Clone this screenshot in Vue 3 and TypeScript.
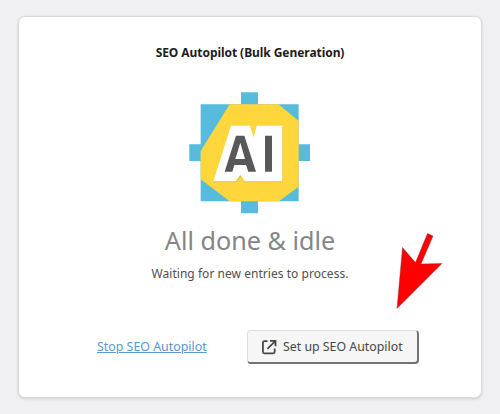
<script setup lang="ts">
const title: string = 'SEO Autopilot (Bulk Generation)'
const status: string = 'All done & idle'
const detail: string = 'Waiting for new entries to process.'
</script>

<template>
  <main class="page">
    <section class="card">
      <h1 class="title"><span>{{ title }}</span></h1>
      <svg class="logo" viewBox="27 20 366 366" aria-hidden="true">
        <path fill="#57bbdc" d="M183 21h51v363h-51zM28 177h362v50H28zM62 57h294v291H62z" />
        <path fill="#ffd63c" d="M149 57H296L356 107V304L297 348H149L62 282V197Z" />
        <path fill="#d6ae35" opacity=".6" d="M153 125H212L222 160L231 125H309V291H193L182 275L169 291H101Z" />
        <path fill="#fff" d="M153 121H210L221 156L230 121H307V288H193L181 268L168 288H100Z" />
        <path fill="#58585a" fill-rule="evenodd" d="M168 151H193L228 259H205L198 239H163L157 259H134ZM181 172L166 221H195ZM255 151H276V259H255Z" />
      </svg>
      <h2 class="status"><span>{{ status }}</span></h2>
      <p class="detail"><span>{{ detail }}</span></p>
      <div class="actions">
        <a class="stop" href="#">Stop SEO Autopilot</a>
        <button class="setup" type="button">
          <svg class="open-icon" viewBox="0 0 16 16" aria-hidden="true">
            <path d="M6.5 2.2H3.4Q1.9 2.2 1.9 3.7V12.8Q1.9 14.3 3.4 14.3H12.2Q13.7 14.3 13.7 12.8V9.6M9 1.8H14.5V7.3M14.2 2.1L6.4 9.8" />
          </svg>
          <span>Set up SEO Autopilot</span>
        </button>
      </div>
    </section>
    <svg class="pointer" viewBox="0 0 44 78" aria-hidden="true">
      <path d="M31.5 2.5L37 5L25 33L46 32.5L1 77.5L6.5 16.5L19.5 31.5Z" />
    </svg>
  </main>
</template>

<style>
body {
  margin: 0;
  background: #f0f0f2;
}
</style>

<style scoped>
.page {
  position: relative;
  box-sizing: border-box;
  width: 500px;
  height: 414px;
  padding: 16px 18px 0;
  overflow: hidden;
  font-family: "Noto Sans", "Open Sans", sans-serif;
}
.card {
  box-sizing: border-box;
  display: flex;
  flex-direction: column;
  align-items: center;
  width: 464px;
  height: 382px;
  padding-top: 27px;
  border: 1px solid #d9d9da;
  border-radius: 7px;
  background: #fff;
  box-shadow: 0 1px 3px rgba(0, 0, 0, 0.14);
}
h1, h2, p {
  margin: 0;
  white-space: nowrap;
}
.title {
  font-size: 12px;
  font-weight: 700;
  line-height: 18px;
  letter-spacing: -0.06px;
  color: #1c1c1c;
}
.logo {
  width: 122px;
  height: 122px;
  margin-top: 30px;
}
.status {
  margin-top: 9px;
  font-size: 25.2px;
  font-weight: 400;
  line-height: 34px;
  color: #858585;
}
.detail {
  margin-top: 8px;
  font-size: 12px;
  letter-spacing: 0.04px;
  line-height: 18px;
  color: #505050;
}
.actions {
  display: flex;
  align-items: center;
  align-self: stretch;
  justify-content: space-between;
  margin-top: 47px;
  padding: 0 62px 0 78px;
}
.stop {
  font-size: 12.4px;
  line-height: 18px;
  color: #5b97d2;
  text-decoration: underline;
  white-space: nowrap;
}
.setup {
  box-sizing: border-box;
  display: flex;
  align-items: center;
  gap: 6px;
  width: 172px;
  height: 34px;
  padding: 1px 0 0 13px;
  border: 1px solid #dedede;
  border-right: 2px solid #737373;
  border-bottom: 2px solid #737373;
  border-radius: 4px;
  background: #f6f6f6;
  font: 12.35px/18px "Noto Sans", "Open Sans", sans-serif;
  color: #484848;
  white-space: nowrap;
}
.open-icon {
  flex: none;
  width: 16px;
  height: 16px;
  fill: none;
  stroke: #484848;
  stroke-width: 1.8;
}
.pointer {
  position: absolute;
  left: 396px;
  top: 231px;
  width: 44px;
  height: 78px;
  overflow: visible;
  fill: #f00;
  stroke: #6b3636;
  stroke-width: 0.4;
}
</style>
